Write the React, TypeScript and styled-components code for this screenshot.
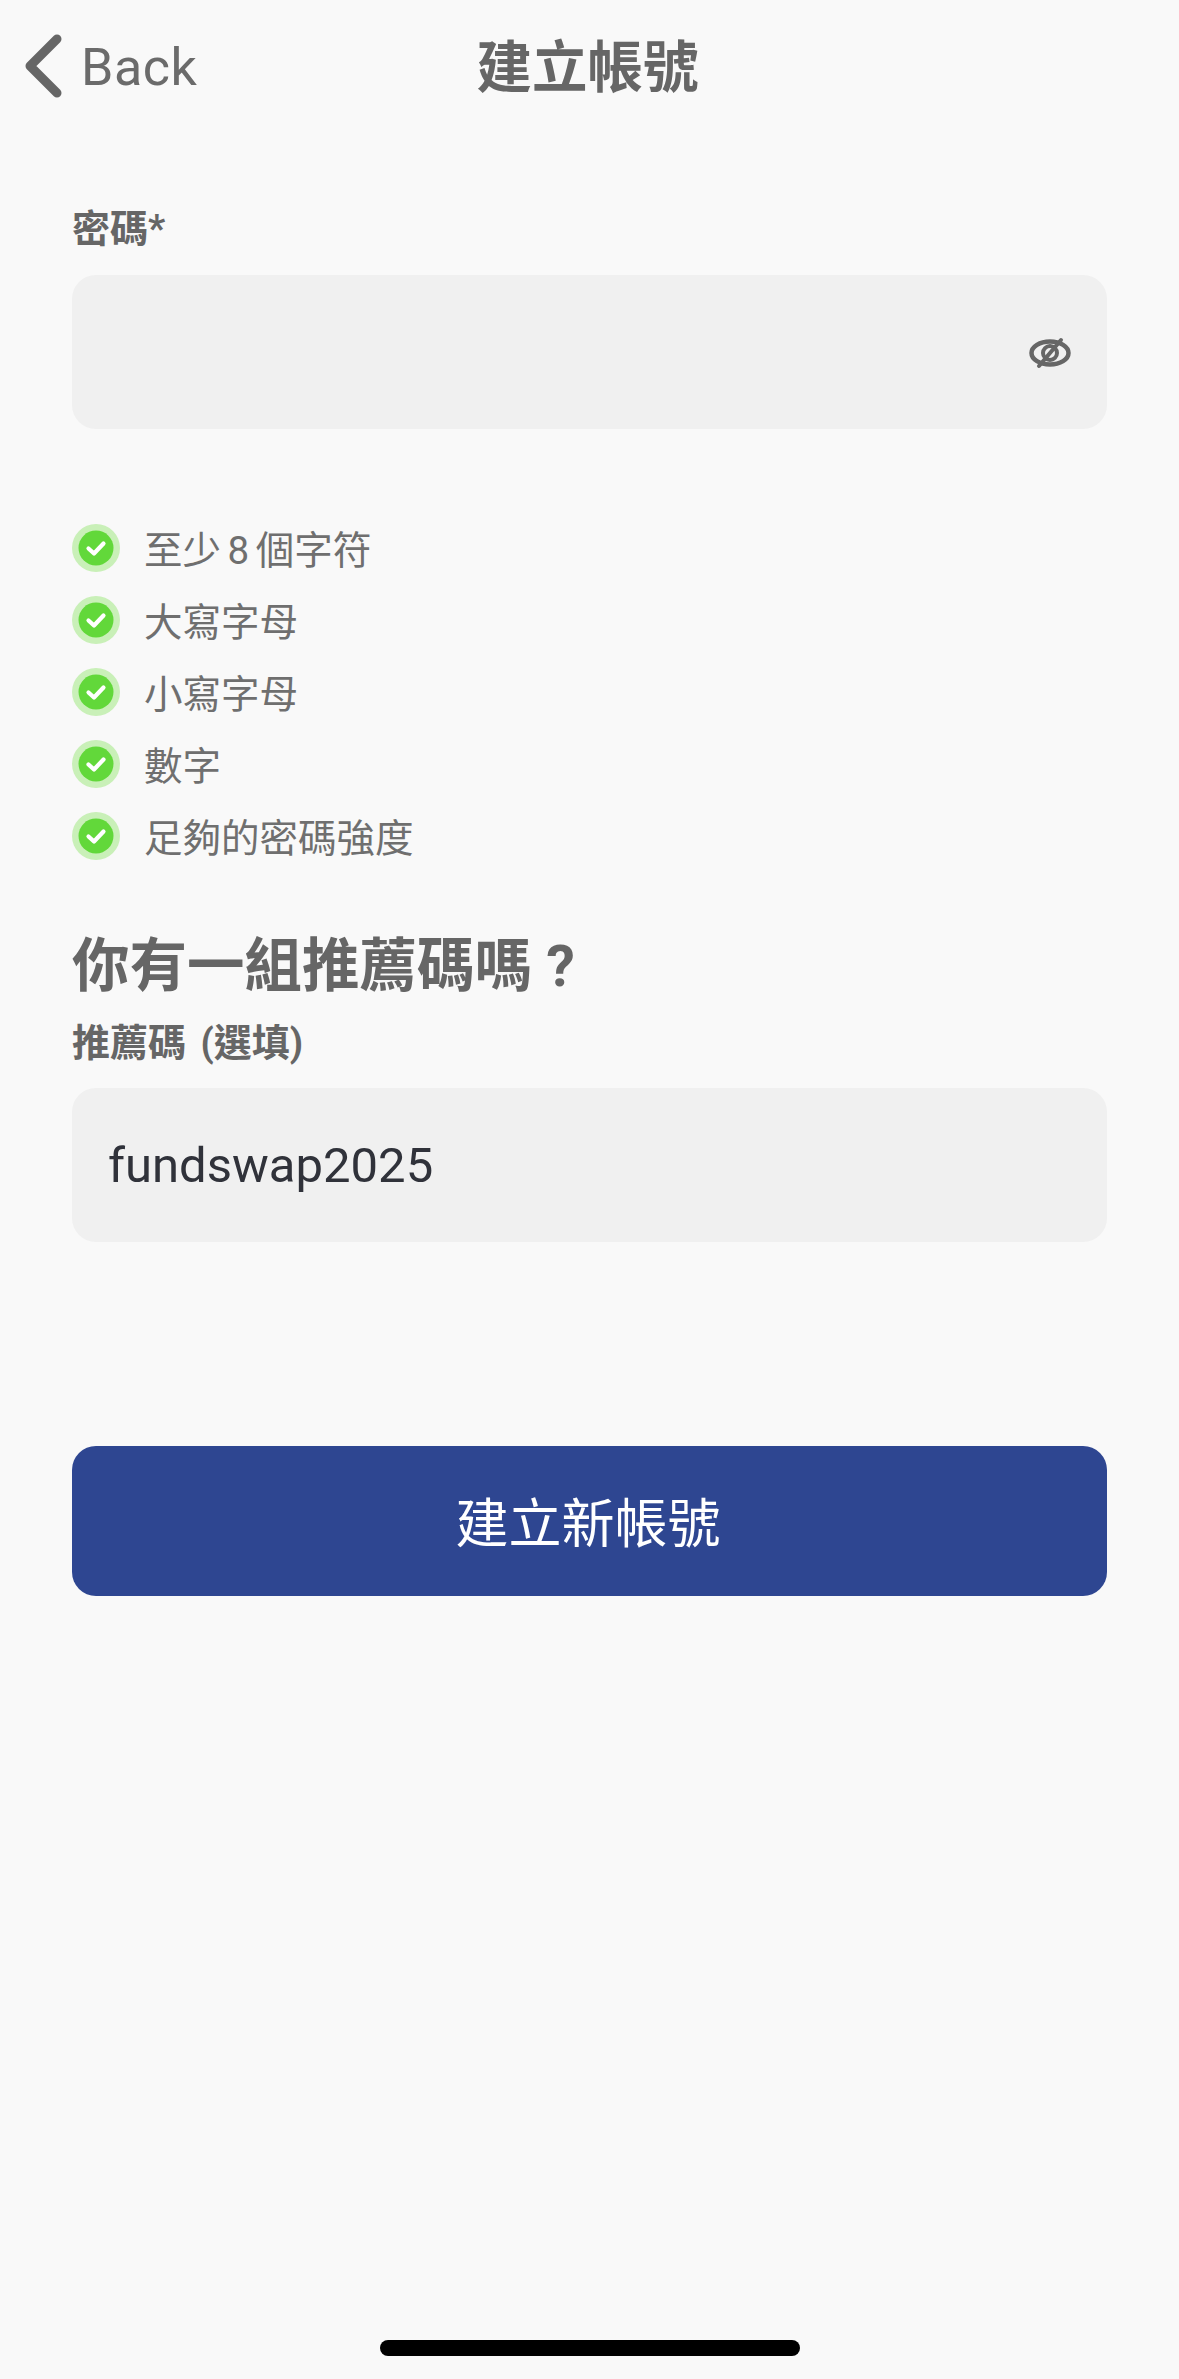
import React from "react";
import styled, { createGlobalStyle } from "styled-components";

const Global = createGlobalStyle`
  html, body { margin: 0; padding: 0; background: #f9f9f9; }
  body { font-family: Roboto, "Noto Sans CJK TC", sans-serif; }
  * { box-sizing: border-box; }
`;

const Page = styled.div`
  width: 1179px;
  height: 2379px;
  background: #f9f9f9;
  display: flex;
  flex-direction: column;
  overflow: hidden;
`;

const Header = styled.header`
  display: grid;
  grid-template-columns: 1fr auto 1fr;
  align-items: center;
  height: 132px;
  padding: 0 24px;
`;

const BackLink = styled.div`
  display: flex;
  align-items: center;
  gap: 19px;
  color: #6b6b6b;
  font-size: 52px;
  line-height: 64px;
`;

const BackText = styled.span`
  margin-top: 4px;
  letter-spacing: 0.5px;
`;

const Title = styled.h1`
  margin: 0 4px 4px 0;
  color: #666666;
  font-size: 55.5px;
  font-weight: 700;
  font-family: "Noto Sans CJK TC", sans-serif;
  line-height: 1;
`;

const Main = styled.main`
  display: flex;
  flex-direction: column;
  padding: 71px 72px 0;
`;

const FieldLabel = styled.label`
  display: block;
  color: #666666;
  font-size: 38px;
  font-weight: 700;
  font-family: Roboto, "Noto Sans CJK TC", sans-serif;
  line-height: 52px;
  margin-bottom: 20px;
`;

const Field = styled.div`
  display: flex;
  align-items: center;
  justify-content: space-between;
  height: 154px;
  padding: 0 36px;
  border-radius: 24px;
  background: #f0f0f0;
`;

const FieldInput = styled.input`
  flex: 1;
  min-width: 0;
  border: 0;
  outline: 0;
  padding: 0;
  background: transparent;
  color: #30323a;
  font-family: Roboto, sans-serif;
  font-size: 49px;
`;

const EyeSlot = styled.span`
  display: flex;
  margin-top: 2px;
`;

const Rules = styled.ul`
  list-style: none;
  margin: 95px 0 0;
  padding: 0;
  display: flex;
  flex-direction: column;
  gap: 24px;
`;

const Rule = styled.li`
  display: flex;
  align-items: center;
  gap: 24px;
  height: 48px;
  color: #6f6f6f;
  font-size: 38.5px;
  word-spacing: -3px;
  font-family: Roboto, "Noto Sans CJK TC", sans-serif;
  font-weight: 400;
`;

const RuleText = styled.span`
  margin-bottom: 3px;
`;

const RuleBadge = styled.svg`
  width: 48px;
  height: 48px;
  flex: none;
`;

const Heading = styled.h2`
  margin: 67px 0 0;
  color: #666666;
  font-size: 57.5px;
  font-weight: 700;
  font-family: Roboto, "Noto Sans CJK TC", sans-serif;
  line-height: 80px;
`;

const ReferralLabel = styled(FieldLabel)`
  margin-top: 10px;
  margin-bottom: 19px;
  word-spacing: 5px;
`;

const PrimaryButton = styled.button`
  margin-top: 204px;
  height: 150px;
  padding: 0 3px 3px 0;
  border: 0;
  border-radius: 24px;
  background: #2e4691;
  color: #ffffff;
  font-size: 53px;
  font-family: "Noto Sans CJK TC", sans-serif;
  font-weight: 400;
`;

const Spacer = styled.div`
  flex: 1;
`;

const HomeBar = styled.div`
  align-self: center;
  width: 420px;
  height: 16px;
  margin-bottom: 23px;
  border-radius: 8px;
  background: #000000;
`;

const Chevron = () => (
  <svg width="38" height="64" viewBox="0 0 38 64" fill="none">
    <path d="M33 5 L6 32 L33 59" stroke="#666666" strokeWidth="9" strokeLinecap="round" strokeLinejoin="round" />
  </svg>
);

const EyeOff = () => (
  <svg width="42" height="32" viewBox="0 0 42 32" fill="none" stroke="#666666">
    <ellipse cx="21" cy="16" rx="18.5" ry="11.5" strokeWidth="4.5" />
    <circle cx="21" cy="16" r="7" strokeWidth="4" />
    <path d="M32 3 L10 29" strokeWidth="4" strokeLinecap="round" />
  </svg>
);

const Check = () => (
  <RuleBadge viewBox="0 0 48 48">
    <circle cx="24" cy="24" r="24" fill="#c9f0b8" />
    <circle cx="24" cy="24" r="17.5" fill="#62d83a" />
    <path d="M16.5 24.5 L22 29.5 L31.5 19.5" fill="none" stroke="#ffffff" strokeWidth="4.2" strokeLinecap="round" strokeLinejoin="round" />
  </RuleBadge>
);

const rules = ["至少 8 個字符", "大寫字母", "小寫字母", "數字", "足夠的密碼強度"];

export default function App() {
  return (
    <Page>
      <Global />
      <Header>
        <BackLink>
          <Chevron />
          <BackText>Back</BackText>
        </BackLink>
        <Title>建立帳號</Title>
      </Header>
      <Main>
        <FieldLabel>密碼*</FieldLabel>
        <Field>
          <FieldInput type="password" readOnly aria-label="密碼" />
          <EyeSlot>
            <EyeOff />
          </EyeSlot>
        </Field>
        <Rules>
          {rules.map((r) => (
            <Rule key={r}>
              <Check />
              <RuleText>{r}</RuleText>
            </Rule>
          ))}
        </Rules>
        <Heading>你有一組推薦碼嗎 ?</Heading>
        <ReferralLabel>推薦碼 (選填)</ReferralLabel>
        <Field>
          <FieldInput readOnly defaultValue="fundswap2025" aria-label="推薦碼" />
        </Field>
        <PrimaryButton>建立新帳號</PrimaryButton>
      </Main>
      <Spacer />
      <HomeBar />
    </Page>
  );
}
